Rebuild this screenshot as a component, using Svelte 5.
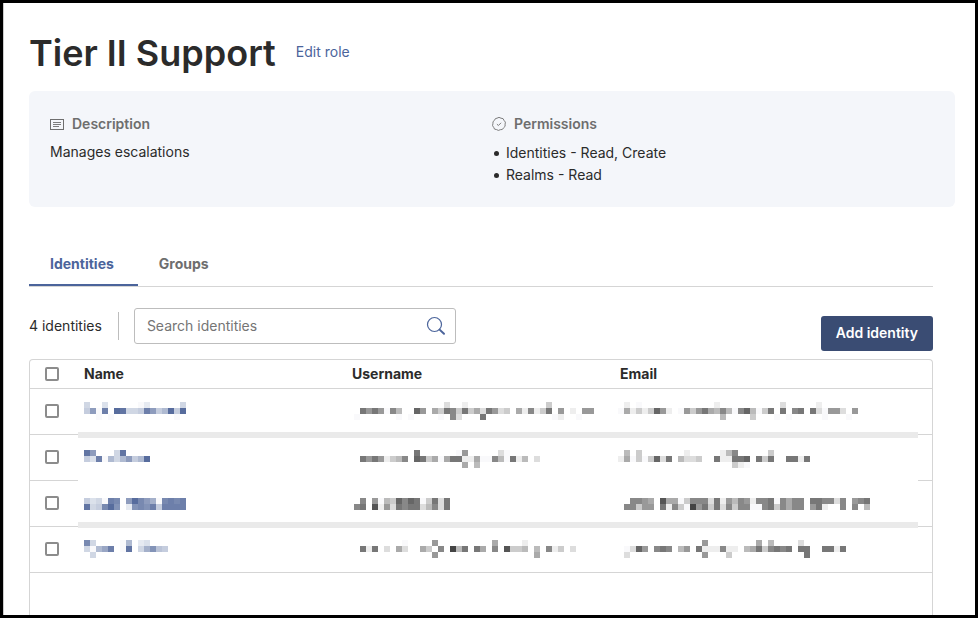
<script>
  // Each redacted value is three (or two) lines of 6px cells; a hex digit is
  // the brightness of the cell and a dot leaves it empty.
  const CELL = 6;
  const blocks = [
    { x: 1, y: 2, blue: true, lines: ['c..d.....fe.....c', 'b6f3.12ccb36b91b1', '..f.f..........f.'] },
    { x: 46, y: 2, lines: ['...............d..e.............c', '.7979f8b..69.ac78c7cad79dc.ae8ec7.9.e.99', 'f......f.f....f.8d...7...........fe..f'] },
    { x: 90, y: 2, lines: ['.e.f............e..........d.....e', 'faecec69e.f9c97ab8bf86bfc7.7.87.7df99d.9', '.................b....c...f.f.....f...f'] },
    { x: 1, y: 10, blue: true, lines: ['26...c2', 'bd3f9c96b91'] },
    { x: 46, y: 10, lines: ['..........7......f9.....df', '.7979ecb8.67cafa77eeaff8bf7eb.d', '..................a.b'] },
    { x: 90, y: 10, lines: ['.b.c.......e.....eb8.....c', 'eafcfc6d7.bddc..7ee776.7c7..77e7', '...................cef'] },
    { x: 1, y: 18, blue: true, lines: ['bdcf34.61468f4343', '2cb415.e5453b3333'] },
    { x: 46, y: 18, lines: ['.8.9fbc6867fc7d7', '87.5e9d7877db8d7'] },
    { x: 90, y: 18, lines: ['..889a.5aafc888d7e9b89e887f8a88.7788d8.987', '.88c99.7e8cf497c7d8c88ff87c8a88.97e..8.8.b'] },
    { x: 1, y: 25, blue: true, lines: ['4c....f9.ed', 'cf973.f2.c85ab', '.c'] },
    { x: 46, y: 25, lines: ['........f....9.........a....e', '.7e7.d.ad..ac.8.4b7.7a.8.5ccb.b.8ec.d', '.............9................a'] },
    { x: 90, y: 25, lines: ['..............9........a.b....d', '.fd69.878.b9.7eee8ee.ba7c8787.77..77e7', '.d............9...c............7'] }
  ];

  function shade(digit, blue) {
    const level = parseInt(digit, 16);
    if (level === 15) return '#f9f9fb';
    const t = level / 15;
    if (!blue) return `rgb(${level * 17}, ${level * 17}, ${level * 17})`;
    return `rgb(${Math.round(76 + 165 * t)}, ${Math.round(98 + 146 * t)}, ${Math.round(150 + 98 * t)})`;
  }

  const cells = blocks.flatMap((block) =>
    block.lines.flatMap((line, row) =>
      [...line].flatMap((digit, col) =>
        digit === '.' ? [] : [{ x: (block.x + col) * CELL, y: (block.y + row) * CELL, fill: shade(digit, block.blue) }]
      )
    )
  );

  const rows = [1, 2, 3, 4];
  let query = $state('');
</script>

<div class="frame">
  <header>
    <h1>Tier II Support</h1>
    <a href="#edit">Edit role</a>
  </header>

  <section class="summary">
    <div>
      <h2>
        <svg width="14" height="14" viewBox="0 0 14 14" fill="none" stroke="currentColor" aria-hidden="true">
          <rect x="0.5" y="2.5" width="13" height="10" />
          <path d="M3 5.5h8M3 7.5h8M3 9.5h6" stroke-width="0.9" />
        </svg>
        Description
      </h2>
      <p>Manages escalations</p>
    </div>
    <div>
      <h2>
        <svg width="14" height="14" viewBox="0 0 14 14" fill="none" stroke="currentColor" stroke-width="0.9" stroke-linejoin="round" aria-hidden="true">
          <path d="M5 1.2Q7 -.5 9 1.2Q11.6 1 12 3.4Q14.2 5 13.1 7.2Q13.8 9.7 11.6 10.8Q10.7 13.2 8.3 12.7Q6.3 14.2 4.6 12.6Q2 12.8 1.7 10.4Q-.2 8.8 .9 6.7Q.4 4.2 2.5 3.3Q3 1 5 1.2Z" />
          <path d="M4.9 7.1l1.5 1.4L9.1 5.8" />
        </svg>
        Permissions
      </h2>
      <ul>
        <li>Identities - Read, Create</li>
        <li>Realms - Read</li>
      </ul>
    </div>
  </section>

  <main>
    <div class="tabs" role="tablist">
      <button class="tab active" role="tab" aria-selected="true">Identities</button>
      <button class="tab" role="tab" aria-selected="false">Groups</button>
    </div>

    <div class="toolbar">
      <span class="count">4 identities</span>
      <div class="search">
        <input type="text" placeholder="Search identities" aria-label="Search identities" bind:value={query} />
        <svg width="20" height="20" viewBox="0 0 20 20" fill="none" stroke="#4b649b" aria-hidden="true">
          <circle cx="8.5" cy="8.5" r="7" stroke-width="1.2" />
          <path d="M13.6 13.6l4.4 4.2" stroke-width="2" stroke-linecap="round" />
        </svg>
      </div>
      <button class="add">Add identity</button>
    </div>

    <div class="table-wrap">
      <table>
        <colgroup>
          <col class="pick" />
          <col class="third" />
          <col class="third" />
          <col />
        </colgroup>
        <thead>
          <tr>
            <th><input type="checkbox" aria-label="Select all identities" /></th>
            <th>Name</th>
            <th>Username</th>
            <th>Email</th>
          </tr>
        </thead>
        <tbody>
          {#each rows as row}
            <tr>
              <td><input type="checkbox" aria-label={`Select identity ${row}`} /></td>
              <td></td>
              <td></td>
              <td></td>
            </tr>
          {/each}
        </tbody>
      </table>
      <svg class="redaction" width="840" height="174" shape-rendering="crispEdges" aria-hidden="true">
        <rect width="840" height="174" fill="#fff" />
        <rect y="42" width="840" height="6" fill="#eaeaea" />
        <rect y="132" width="840" height="6" fill="#eaeaea" />
        {#each cells as cell}
          <rect x={cell.x} y={cell.y} width={CELL} height={CELL} fill={cell.fill} />
        {/each}
      </svg>
    </div>
  </main>
</div>

<style>
  :global(body) {
    margin: 0;
    background: #fff;
  }

  .frame {
    box-sizing: border-box;
    height: 100vh;
    overflow: hidden;
    display: flex;
    flex-direction: column;
    padding: 26px 20px 0 26px;
    border: 3px solid #000;
    box-shadow: inset 1px 0 #ccc;
    color: #2b2b2b;
    font: 14px/22px Inter, 'Liberation Sans', sans-serif;
  }

  button,
  input {
    font: inherit;
  }

  header {
    display: flex;
    align-items: center;
    gap: 20px;
  }

  h1 {
    margin: 0;
    font-size: 36px;
    line-height: 48px;
    font-weight: 600;
  }

  header a {
    margin-bottom: 2px;
    color: #4b649b;
    text-decoration: none;
  }

  .summary {
    display: grid;
    grid-template-columns: 1fr 1fr;
    box-sizing: border-box;
    min-height: 116px;
    margin-top: 14px;
    padding: 22px 21px 20px;
    border-radius: 6px;
    background: #f4f6fa;
  }

  h2 {
    display: flex;
    align-items: center;
    gap: 8px;
    margin: 0 0 6px;
    color: #6e6e6e;
    font-size: 14px;
    line-height: 22px;
    font-weight: 600;
  }

  p {
    margin: 0;
  }

  ul {
    margin: 7px 0 0;
    padding: 0 0 0 2px;
    list-style: none;
  }

  li {
    display: flex;
    align-items: center;
    gap: 7px;
  }

  li::before {
    content: '';
    width: 5px;
    height: 5px;
    border-radius: 50%;
    background: #2b2b2b;
  }

  main {
    flex: 1;
    display: flex;
    flex-direction: column;
    margin: 36px 22px 0 0;
  }

  .tabs {
    display: flex;
    border-bottom: 1px solid #d5d5d5;
  }

  .tab {
    padding: 10px 24px 9px 21px;
    border: 0;
    border-bottom: 2px solid transparent;
    background: none;
    color: #6e6e6e;
    font-weight: 700;
  }

  .tab.active {
    border-color: #4b649b;
    color: #4b649b;
  }

  .toolbar {
    display: flex;
    align-items: flex-end;
    padding: 21px 0 8px;
  }

  .toolbar > * {
    flex: none;
  }

  .count {
    margin: 0 15px 11px 0;
    padding-right: 16px;
    border-right: 1px solid #bdbdbd;
    line-height: 28px;
  }

  .search {
    display: flex;
    align-items: center;
    box-sizing: border-box;
    width: 322px;
    height: 36px;
    margin-bottom: 7px;
    padding: 0 9px 0 12px;
    border: 1px solid #bdbdbd;
    border-radius: 3px;
  }

  .search input {
    flex: 1;
    min-width: 0;
    padding: 0;
    border: 0;
    outline: 0;
    background: none;
  }

  .search input::placeholder {
    color: #757575;
  }

  .add {
    height: 35px;
    margin-left: auto;
    padding: 0 15px 2px;
    border: 0;
    border-radius: 3px;
    background: #3a4c73;
    color: #fff;
    font-weight: 600;
  }

  .table-wrap {
    position: relative;
    flex: 1;
    border: 1px solid #d5d5d5;
    border-bottom: 0;
    border-radius: 4px 4px 0 0;
  }

  table {
    width: 100%;
    table-layout: fixed;
    border-collapse: separate;
    border-spacing: 0;
  }

  .pick {
    width: 54px;
  }

  .third {
    width: 268px;
  }

  th,
  td {
    box-sizing: border-box;
    height: 46px;
    padding: 0;
    border-bottom: 1px solid #d5d5d5;
    text-align: left;
    font-weight: 700;
  }

  td {
    padding-bottom: 2px;
  }

  th {
    height: 29px;
  }

  input[type='checkbox'] {
    appearance: none;
    display: block;
    box-sizing: border-box;
    width: 14px;
    height: 14px;
    margin: 0 0 0 15px;
    border: 2px solid #8c8c8c;
    border-radius: 2px;
    background: #fff;
  }

  .redaction {
    position: absolute;
    top: 30px;
    left: 48px;
  }
</style>
